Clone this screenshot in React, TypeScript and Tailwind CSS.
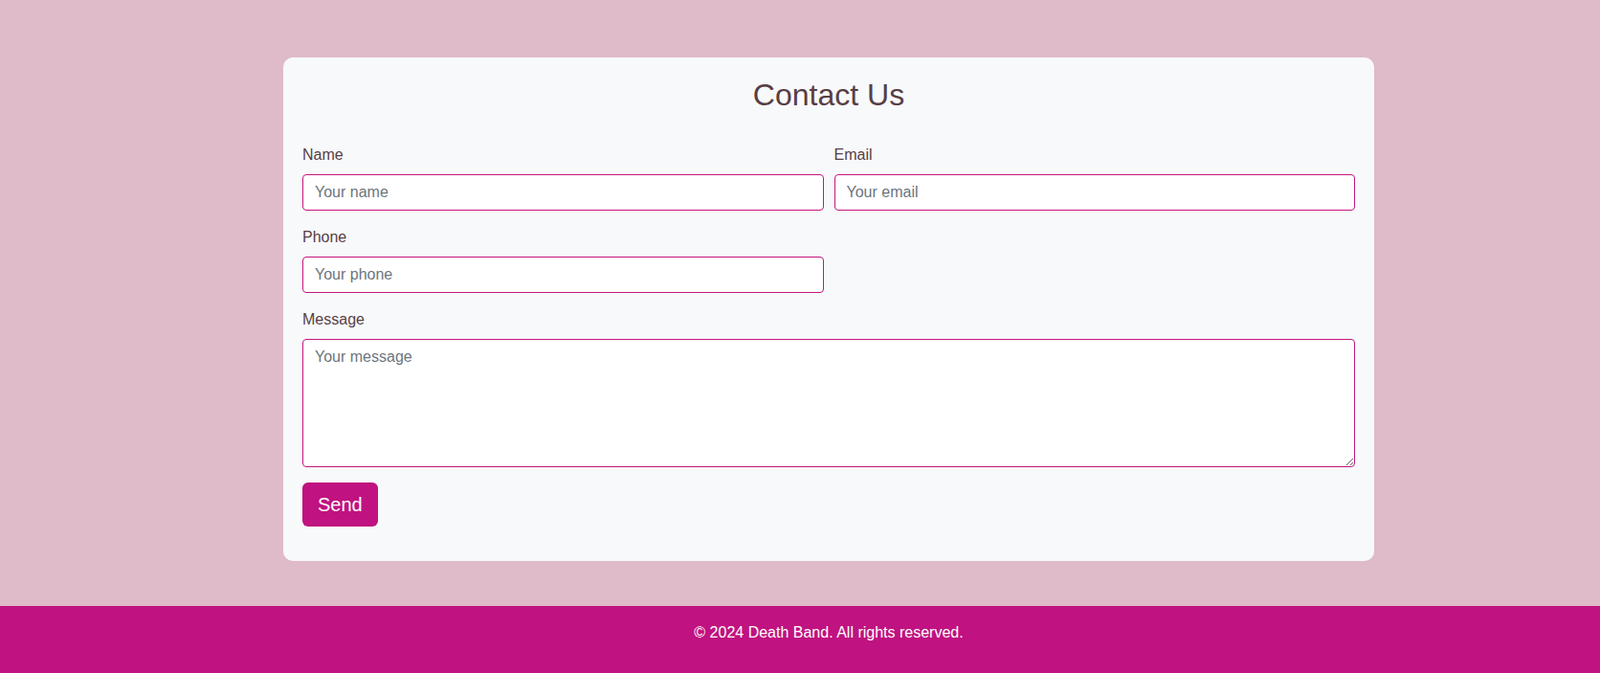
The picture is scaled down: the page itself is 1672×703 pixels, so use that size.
import { useState } from "react";

const ContactPage = () => {
  const [name, setName] = useState("");
  const [email, setEmail] = useState("");
  const [phone, setPhone] = useState("");
  const [message, setMessage] = useState("");

  const handleSubmit = (e: React.FormEvent) => {
    e.preventDefault();
    setName("");
    setEmail("");
    setPhone("");
    setMessage("");
  };

  const inputClass =
    "w-full h-[38px] px-3 bg-white border border-[#c4167f] rounded-[4px] text-[16px] text-[#212529] placeholder:text-[#6c757d] outline-none";

  return (
    <div
      className="min-h-screen bg-[#dfbac8] flex flex-col"
      style={{ fontFamily: '"Liberation Sans", Arial, sans-serif' }}
    >
      <main className="flex-1 pt-[60px] pb-[47px] pl-[60px]">
        <section className="mx-auto w-[1140px] bg-[#f8f9fa] rounded-[10px] p-5">
          <h2 className="text-center text-[32px] leading-[38px] text-[#573e45] mb-[32px]">
            Contact Us
          </h2>

          <form onSubmit={handleSubmit} className="flex flex-col">
            <div className="grid grid-cols-2 gap-x-[11px]">
              <div className="mb-4">
                <label className="block text-[16px] leading-6 text-[#573e45] mb-2">
                  Name
                </label>
                <input
                  type="text"
                  placeholder="Your name"
                  value={name}
                  onChange={(e) => setName(e.target.value)}
                  className={inputClass}
                />
              </div>
              <div className="mb-4">
                <label className="block text-[16px] leading-6 text-[#573e45] mb-2">
                  Email
                </label>
                <input
                  type="email"
                  placeholder="Your email"
                  value={email}
                  onChange={(e) => setEmail(e.target.value)}
                  className={inputClass}
                />
              </div>
              <div className="mb-4">
                <label className="block text-[16px] leading-6 text-[#573e45] mb-2">
                  Phone
                </label>
                <input
                  type="tel"
                  placeholder="Your phone"
                  value={phone}
                  onChange={(e) => setPhone(e.target.value)}
                  className={inputClass}
                />
              </div>
            </div>

            <div className="mb-4">
              <label className="block text-[16px] leading-6 text-[#573e45] mb-2">
                Message
              </label>
              <textarea
                rows={5}
                placeholder="Your message"
                value={message}
                onChange={(e) => setMessage(e.target.value)}
                className="block w-full h-[134px] px-3 py-1.5 bg-white border border-[#c4167f] rounded-[4px] text-[16px] leading-6 text-[#212529] placeholder:text-[#6c757d] outline-none"
              />
            </div>

            <div className="mb-4">
              <button
                type="submit"
                className="h-[46px] px-4 bg-[#c01280] text-white text-[20px] leading-[30px] rounded-[6px]"
              >
                Send
              </button>
            </div>
          </form>
        </section>
      </main>

      <footer className="bg-[#c01280] text-white pt-4 pb-8 pl-[60px] text-center text-[16px] leading-6">
        © 2024 Death Band. All rights reserved.
      </footer>
    </div>
  );
};

export default ContactPage;
